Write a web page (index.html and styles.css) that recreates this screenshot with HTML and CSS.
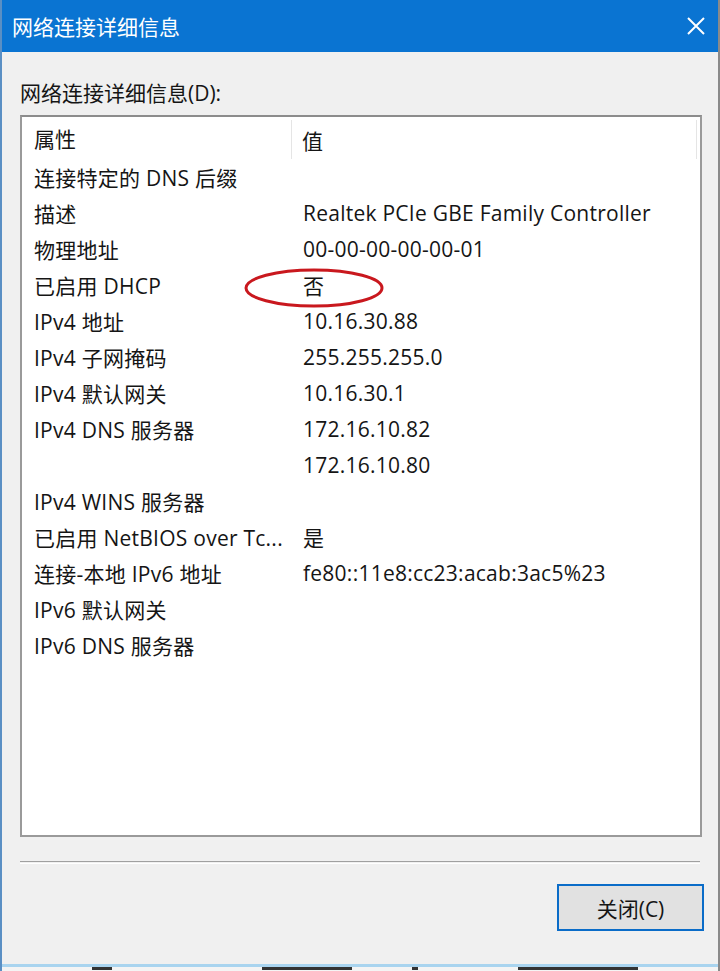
FILE: index.html
```html
<!DOCTYPE html>
<html lang="zh-CN">
<head>
<meta charset="utf-8">
<title>网络连接详细信息</title>
<link rel="stylesheet" href="styles.css">
</head>
<body>
<div class="window">
  <div class="titlebar">
    <span class="title">网络连接详细信息</span>
    <svg class="close" width="18" height="18" viewBox="0 0 18 18"><path d="M1 1 L17 17 M17 1 L1 17" stroke="#ffffff" stroke-width="2" fill="none"/></svg>
  </div>
  <div class="content">
    <div class="label">网络连接详细信息(D):</div>
    <div class="listbox">
      <div class="header">
        <div class="hcell c1">属性</div>
        <div class="hcell c2">值</div>
      </div>
      <div class="row"><div class="c1">连接特定的 DNS 后缀</div><div class="c2"></div></div>
      <div class="row"><div class="c1">描述</div><div class="c2">Realtek PCIe GBE Family Controller</div></div>
      <div class="row"><div class="c1">物理地址</div><div class="c2">00-00-00-00-00-01</div></div>
      <div class="row"><div class="c1">已启用 DHCP</div><div class="c2">否</div></div>
      <div class="row"><div class="c1">IPv4 地址</div><div class="c2">10.16.30.88</div></div>
      <div class="row"><div class="c1">IPv4 子网掩码</div><div class="c2">255.255.255.0</div></div>
      <div class="row"><div class="c1">IPv4 默认网关</div><div class="c2">10.16.30.1</div></div>
      <div class="row"><div class="c1">IPv4 DNS 服务器</div><div class="c2">172.16.10.82</div></div>
      <div class="row"><div class="c1"></div><div class="c2">172.16.10.80</div></div>
      <div class="row"><div class="c1">IPv4 WINS 服务器</div><div class="c2"></div></div>
      <div class="row"><div class="c1">已启用 NetBIOS over Tc...</div><div class="c2">是</div></div>
      <div class="row"><div class="c1">连接-本地 IPv6 地址</div><div class="c2">fe80::11e8:cc23:acab:3ac5%23</div></div>
      <div class="row"><div class="c1">IPv6 默认网关</div><div class="c2"></div></div>
      <div class="row"><div class="c1">IPv6 DNS 服务器</div><div class="c2"></div></div>
      <svg class="mark" width="144" height="44" viewBox="0 0 144 44"><ellipse cx="72" cy="22" rx="68" ry="18" fill="none" stroke="#c9181e" stroke-width="3"/></svg>
    </div>
    <div class="separator"></div>
    <div class="buttons">
      <div class="btn">关闭(C)</div>
    </div>
  </div>
  <div class="under">
    <span class="frag f1"></span><span class="frag f2"></span><span class="frag f3"></span><span class="frag f4"></span>
  </div>
</div>
</body>
</html>
```
FILE: styles.css
```css
html, body {
  margin: 0;
  padding: 0;
  background: #f0f0f0;
}
body {
  font-family: "Open Sans", "Noto Sans CJK SC", sans-serif;
  color: #151515;
}
.window {
  width: 720px;
  height: 971px;
  overflow: hidden;
  background: #f0f0f0;
  border-left: 2px solid #5a8fc4;
  border-right: 2px solid #8a8a8a;
  box-sizing: border-box;
  display: flex;
  flex-direction: column;
}
.titlebar {
  height: 52px;
  flex: none;
  background: #0a74d2;
  display: flex;
  align-items: center;
  justify-content: space-between;
  padding: 0 13px 0 10px;
}
.title {
  color: #ffffff;
  font-size: 21px;
  font-family: "Noto Sans CJK SC", sans-serif;
}
.close {
  display: block;
}
.content {
  padding: 0 16px 0 18px;
  flex: none;
}
.label {
  margin-top: 28px;
  height: 27px;
  line-height: 27px;
  font-size: 21px;
  margin-bottom: 8px;
}
.listbox {
  position: relative;
  height: 722px;
  box-sizing: border-box;
  border: 2px solid #9a9a9a;
  border-top-color: #8c8c8c;
  background: #ffffff;
}
.header {
  height: 42px;
  display: flex;
  align-items: stretch;
}
.hcell {
  display: flex;
  align-items: center;
  font-size: 21px;
}
.header .c1 {
  width: 269px;
  padding-left: 12px;
  box-sizing: border-box;
}
.header .c2 {
  flex: 1;
  border-left: 1px solid #e5e5e5;
  border-right: 1px solid #e5e5e5;
  margin: 3px 3px 0 0;
  padding-left: 10px;
}
.row {
  height: 36px;
  display: flex;
  align-items: center;
  font-size: 21px;
  letter-spacing: 0.25px;
  white-space: nowrap;
}
.row .c1 {
  width: 270px;
  padding-left: 12px;
  box-sizing: border-box;
}
.row .c2 {
  padding-left: 11px;
}
.mark {
  position: absolute;
  left: 220px;
  top: 149px;
}
.separator {
  margin-top: 24px;
  height: 1px;
  border-top: 1px solid #a0a0a0;
  border-bottom: 1px solid #ffffff;
  margin-right: 2px;
}
.buttons {
  display: flex;
  justify-content: flex-end;
  margin-top: 20px;
}
.btn {
  width: 147px;
  height: 47px;
  box-sizing: border-box;
  border: 2px solid #0a6cc8;
  background: #e1e1e1;
  display: flex;
  align-items: center;
  justify-content: center;
  font-size: 21px;
  margin-right: -2px;
}
.under {
  margin-top: 33px;
  border-top: 3px solid #a9d4ef;
  flex: 1;
  background: #f4f4f4;
  position: relative;
}
.frag {
  display: inline-block;
  height: 3px;
  background: #333;
  vertical-align: top;
}
.f1 { width: 20px; margin-left: 90px; }
.f2 { width: 90px; margin-left: 150px; }
.f3 { width: 6px; margin-left: 60px; }
.f4 { width: 120px; margin-left: 100px; }
```
